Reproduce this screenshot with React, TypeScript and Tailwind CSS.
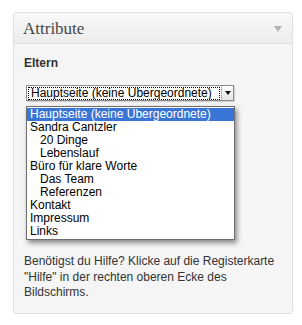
import React from 'react';

const pages: { label: string; depth: number }[] = [
    { label: 'Hauptseite (keine Übergeordnete)', depth: 0 },
    { label: 'Sandra Cantzler', depth: 0 },
    { label: '20 Dinge', depth: 1 },
    { label: 'Lebenslauf', depth: 1 },
    { label: 'Büro für klare Worte', depth: 0 },
    { label: 'Das Team', depth: 1 },
    { label: 'Referenzen', depth: 1 },
    { label: 'Kontakt', depth: 0 },
    { label: 'Impressum', depth: 0 },
    { label: 'Links', depth: 0 },
];

const App: React.FC = () => {
    return (
        <div className="w-[302px] h-[325px] bg-white pt-[12px] pl-[13px] font-['Liberation_Sans',Arial,sans-serif]">
            <div className="w-[280px] rounded-[3px] border border-[#dfdfdf] bg-[#f5f5f5]">
                {/* header */}
                <div className="h-[31px] flex items-center justify-between pl-[9px] pr-[10px] border-b border-[#dfdfdf] bg-gradient-to-b from-[#f9f9f9] to-[#ececec] rounded-t-[3px]">
                    <span className="font-['Liberation_Serif',Georgia,serif] text-[17px] text-[#464646] leading-none">Attribute</span>
                    <svg width="8" height="6" viewBox="0 0 8 6" className="mt-[1px]">
                        <path d="M0 0 L8 0 L4 6 Z" fill="#b4b4b4" />
                    </svg>
                </div>

                {/* body */}
                <div className="px-[10px] pt-[12px] pb-[12px] text-[#333]">
                    <p className="text-[12px] font-bold leading-[14px]">Eltern</p>

                    <div className="relative mt-[15px] ml-[2px] h-[16px] w-[208px]">
                        {/* closed select */}
                        <div className="flex h-[16px] w-[208px] items-stretch border border-[#8e8e8e] bg-white shadow-[1px_1px_1px_rgba(0,0,0,0.15)]">
                            <div className="flex-1 flex items-center px-[1px]">
                                <span className="flex-1 h-[13px] border border-dotted border-black text-[12px] leading-[11px] text-black pl-[2px] whitespace-nowrap overflow-hidden">
                                    Hauptseite (keine Übergeordnete)
                                </span>
                            </div>
                            <div className="w-[12px] flex items-center justify-center border-l border-[#b8b8b8] bg-gradient-to-b from-white to-[#e4e4e4]">
                                <svg width="6" height="4" viewBox="0 0 6 4">
                                    <path d="M0 0 L6 0 L3 4 Z" fill="#111" />
                                </svg>
                            </div>
                        </div>

                        {/* open list */}
                        <ul className="absolute left-0 top-[21px] w-[209px] border border-[#6e6e6e] bg-white py-[1px] shadow-[2px_3px_5px_rgba(0,0,0,0.45)] z-10">
                            {pages.map((p, i) => (
                                <li
                                    key={p.label}
                                    className={`h-[13px] text-[12px] leading-[13px] whitespace-nowrap ${i === 0 ? 'bg-[#3875d7] text-white' : 'text-black'} ${p.depth ? 'pl-[13px]' : 'pl-[3px]'}`}
                                >
                                    {p.label}
                                </li>
                            ))}
                        </ul>
                    </div>

                    <p className="mt-[153px] text-[12px] leading-[15.5px] text-[#333]">
                        Benötigst du Hilfe? Klicke auf die Registerkarte "Hilfe" in der rechten oberen Ecke des Bildschirms.
                    </p>
                </div>
            </div>
        </div>
    );
};

export default App;
